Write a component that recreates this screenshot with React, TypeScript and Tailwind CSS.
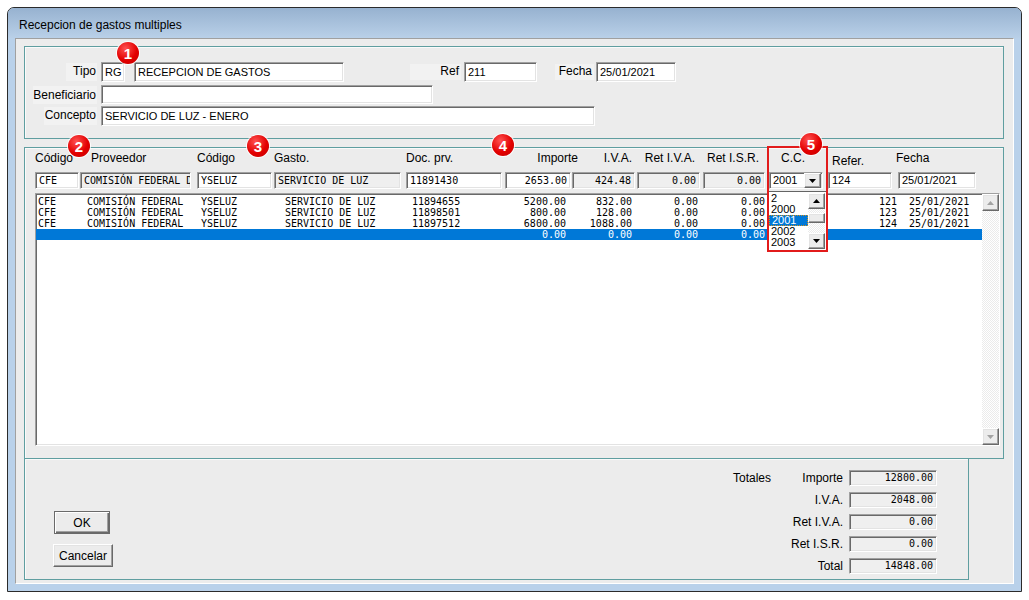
import clsx from "clsx";
import type { ReactNode } from "react";

const sans = "font-['Liberation_Sans',Arial,sans-serif]";
const mono = "font-['DejaVu_Sans_Mono','Liberation_Mono',monospace]";

const sunken =
    "border border-t-[#a0a0a0] border-l-[#a0a0a0] border-r-white border-b-white shadow-[inset_1px_1px_0_#696969,inset_-1px_-1px_0_#e3e3e3]";
const raised =
    "border border-t-white border-l-white border-r-[#696969] border-b-[#696969] shadow-[inset_-1px_-1px_0_#a0a0a0,inset_1px_1px_0_#e3e3e3]";
const checker = "bg-[image:repeating-conic-gradient(#ffffff_0_25%,#ebebeb_0_50%)] bg-[length:2px_2px]";
const groupBox = "border border-[#5f9ea0] shadow-[inset_1px_1px_0_#fafafa]";

const Field = ({
    className,
    gray = false,
    isMono = false,
    right = false,
    children,
}: {
    className?: string;
    gray?: boolean;
    isMono?: boolean;
    right?: boolean;
    children?: ReactNode;
}) => (
    <div
        className={clsx(
            sunken,
            "flex shrink-0 items-center overflow-hidden whitespace-nowrap leading-none text-black",
            gray ? "bg-[#efefef]" : "bg-white",
            isMono ? `${mono} text-[10px]` : "text-[11px]",
            right ? "justify-end pr-[3px]" : "pl-[3px]",
            className,
        )}
    >
        {children}
    </div>
);

const Tri = ({ up = false, color }: { up?: boolean; color: string }) => (
    <svg width="7" height="4" viewBox="0 0 7 4">
        <polygon points={up ? "3.5,0 7,4 0,4" : "0,0 7,0 3.5,4"} fill={color} />
    </svg>
);

const ScrollBtn = ({ up = false, color, className }: { up?: boolean; color: string; className?: string }) => (
    <div className={clsx(raised, "flex shrink-0 items-center justify-center bg-[#ececec]", className)}>
        <Tri up={up} color={color} />
    </div>
);

const Badge = ({ n, className }: { n: number; className: string }) => (
    <div
        className={clsx(
            "absolute z-20 flex h-[22px] w-[22px] items-center justify-center rounded-full bg-[radial-gradient(circle_at_38%_30%,#ff5252,#e30000_55%,#c40000)] text-[15px] font-bold leading-none text-white shadow-[0_0_0_1px_rgba(255,255,255,0.85)]",
            sans,
            className,
        )}
    >
        {n}
    </div>
);

const heads: [string, string][] = [
    ["Código", "w-[56px]"],
    ["Proveedor", "w-[106px]"],
    ["Código", "w-[77px]"],
    ["Gasto.", "w-[132px]"],
    ["Doc. prv.", "w-[114px]"],
    ["Importe", "w-[58px] text-right"],
    ["I.V.A.", "w-[54px] text-right"],
    ["Ret I.V.A.", "w-[63px] text-right"],
    ["Ret I.S.R.", "w-[64px] text-right"],
    ["C.C.", "ml-[22px] w-[51px]"],
    ["Refer.", "w-[64px] pt-[3px]"],
    ["Fecha", "w-[60px]"],
];

const cols = [
    "w-[51px] pl-[2px]",
    "w-[114px]",
    "w-[84px]",
    "w-[127px]",
    "w-[88px]",
    "w-[66px] text-right",
    "w-[66px] text-right",
    "w-[66px] text-right",
    "w-[67px] text-right",
    "w-[132px] text-right",
    "pl-[12px]",
];

const rows = [
    ["CFE", "COMISIÓN FEDERAL", "YSELUZ", "SERVICIO DE LUZ", "11894655", "5200.00", "832.00", "0.00", "0.00", "121", "25/01/2021"],
    ["CFE", "COMISIÓN FEDERAL", "YSELUZ", "SERVICIO DE LUZ", "11898501", "800.00", "128.00", "0.00", "0.00", "123", "25/01/2021"],
    ["CFE", "COMISIÓN FEDERAL", "YSELUZ", "SERVICIO DE LUZ", "11897512", "6800.00", "1088.00", "0.00", "0.00", "124", "25/01/2021"],
    ["", "", "", "", "", "0.00", "0.00", "0.00", "0.00", "", ""],
];

const totals = [
    ["Importe", "12800.00"],
    ["I.V.A.", "2048.00"],
    ["Ret I.V.A.", "0.00"],
    ["Ret I.S.R.", "0.00"],
    ["Total", "14848.00"],
];

const ccOptions = ["2", "2000", "2001", "2002", "2003"];

export default function App() {
    return (
        <div className={clsx("h-[600px] w-[1029px] bg-white pl-[7px] pt-[7px] text-[12px] text-black", sans)}>
            <div className="flex h-[585px] w-[1015px] flex-col overflow-hidden rounded-t-[7px] border border-[#2b2b2b] bg-[#b9d1ea]">
                {/* title bar */}
                <div className="h-[30px] shrink-0 bg-linear-to-b from-[#97b2d0] to-[#b9d0e8] pl-[11px] pt-[10px] text-[12px] leading-[14px]">
                    Recepcion de gastos multiples
                </div>

                <div className="flex-1 px-[7px] pb-[7px]">
                    <div className="relative h-full border border-t-[#a0a0a0] border-l-[#a0a0a0] border-r-white border-b-white bg-[#ececec]">
                        <Badge n={1} className="left-[101px] top-[3px]" />
                        <Badge n={2} className="left-[52px] top-[96px]" />
                        <Badge n={3} className="left-[231px] top-[96px]" />
                        <Badge n={4} className="left-[476px] top-[95px]" />
                        <Badge n={5} className="left-[784px] top-[94px]" />

                        {/* header fields */}
                        <div className={clsx(groupBox, "ml-[8px] mt-[7px] h-[93px] w-[980px] pt-[15px]")}>
                            <div className="flex h-[20px] items-center">
                                <div className="ml-[41px] h-[18px] w-[31px] bg-[#f2f2f2] pr-[1px] text-right leading-[16px]">Tipo</div>
                                <Field className="ml-[4px] h-[20px] w-[24px]">RG</Field>
                                <Field className="ml-[9px] h-[20px] w-[210px]">RECEPCION DE GASTOS</Field>
                                <div className="ml-[66px] h-[16px] w-[51px] bg-[#f2f2f2] pr-[2px] text-right leading-[14px]">Ref</div>
                                <Field className="ml-[3px] h-[20px] w-[73px]">211</Field>
                                <div className="ml-[18px] h-[16px] w-[39px] bg-[#f2f2f2] pr-[2px] text-right leading-[14px]">Fecha</div>
                                <Field className="ml-[2px] h-[20px] w-[80px]">25/01/2021</Field>
                            </div>
                            <div className="mt-[3px] flex h-[19px] items-center">
                                <div className="ml-[8px] h-[18px] w-[64px] bg-[#f2f2f2] pr-[1px] text-right leading-[18px]">Beneficiario</div>
                                <Field className="ml-[4px] h-[19px] w-[332px]" />
                            </div>
                            <div className="mt-[2px] flex h-[20px] items-center">
                                <div className="ml-[19px] h-[18px] w-[53px] bg-[#f2f2f2] pr-[1px] text-right leading-[16px]">Concepto</div>
                                <Field className="ml-[4px] h-[20px] w-[494px]">SERVICIO DE LUZ - ENERO</Field>
                            </div>
                        </div>

                        {/* detail grid */}
                        <div className={clsx(groupBox, "relative ml-[8px] mt-[8px] h-[312px] w-[980px] pl-[10px] pt-[3px]")}>
                            <div className="flex h-[14px] leading-[14px]">
                                {heads.map(([label, cls], i) => (
                                    <div key={i} className={clsx("shrink-0 whitespace-nowrap", cls)}>
                                        {label}
                                    </div>
                                ))}
                            </div>

                            <div className="mt-[7px] flex h-[17px]">
                                <Field className="w-[44px]" isMono>CFE</Field>
                                <Field className="ml-[1px] w-[111px]" gray isMono>COMISIÓN FEDERAL D</Field>
                                <Field className="ml-[6px] w-[75px]" isMono>YSELUZ</Field>
                                <Field className="ml-[2px] w-[127px]" gray isMono>SERVICIO DE LUZ</Field>
                                <Field className="ml-[5px] w-[96px]" isMono>11891430</Field>
                                <Field className="ml-[3px] w-[66px]" isMono right>2653.00</Field>
                                <Field className="ml-[1px] w-[63px]" gray isMono right>424.48</Field>
                                <Field className="ml-[2px] w-[63px]" gray isMono right>0.00</Field>
                                <Field className="ml-[3px] w-[62px]" gray isMono right>0.00</Field>
                                <div className={clsx(sunken, "ml-[4px] flex w-[54px] shrink-0 items-center bg-white pl-[3px] text-[11px]")}>
                                    <span className="flex-1">2001</span>
                                    <ScrollBtn color="#000" className="mr-[1px] h-[15px] w-[17px]" />
                                </div>
                                <Field className="ml-[5px] w-[64px]">124</Field>
                                <Field className="ml-[6px] w-[78px]">25/01/2021</Field>
                            </div>

                            <div className={clsx(sunken, "mt-[4px] flex h-[253px] w-[965px] bg-white")}>
                                <div className={clsx("flex-1 pt-[2px] text-[10px] leading-[11px]", mono)}>
                                    {rows.map((row, r) => (
                                        <div key={r} className={clsx("flex h-[11px] whitespace-pre", r === 3 ? "bg-[#0078d7] text-white" : "text-black")}>
                                            {row.map((cell, c) => (
                                                <div key={c} className={clsx("shrink-0", cols[c])}>
                                                    {cell}
                                                </div>
                                            ))}
                                        </div>
                                    ))}
                                </div>
                                <div className={clsx("flex w-[17px] shrink-0 flex-col", checker)}>
                                    <ScrollBtn up color="#a3a3a3" className="h-[17px]" />
                                    <div className="flex-1" />
                                    <ScrollBtn color="#a3a3a3" className="h-[17px]" />
                                </div>
                            </div>

                            {/* open C.C. dropdown */}
                            <div className="absolute left-[743px] top-[43px] z-10 flex h-[60px] w-[59px] border border-[#646464] bg-white">
                                <div className="flex-1 pt-[1px] text-[11px] leading-[11px]">
                                    {ccOptions.map((o) => (
                                        <div
                                            key={o}
                                            className={clsx(
                                                "h-[11px] pl-[2px]",
                                                o === "2001" && "border border-dotted border-[#d09020] bg-[#0078d7] pl-[1px] leading-[9px] text-white",
                                            )}
                                        >
                                            {o}
                                        </div>
                                    ))}
                                </div>
                                <div className={clsx("my-[1px] mr-[1px] flex w-[17px] flex-col", checker)}>
                                    <ScrollBtn up color="#000" className="h-[16px]" />
                                    <div className={clsx(raised, "mt-[4px] h-[10px] bg-[#ececec]")} />
                                    <div className="flex-1" />
                                    <ScrollBtn color="#000" className="h-[16px]" />
                                </div>
                            </div>
                            <div className="pointer-events-none absolute left-[742px] top-[-2px] z-10 h-[106px] w-[61px] border-2 border-[#e21b1b]" />
                        </div>

                        {/* totals and buttons */}
                        <div className={clsx(groupBox, "-mt-[1px] ml-[8px] flex h-[122px] w-[945px]")}>
                            <div className="flex flex-col items-start pl-[28px] pt-[52px]">
                                <button
                                    type="button"
                                    className="ml-[1px] h-[23px] w-[56px] border border-[#6a6a6a] bg-[#ececec] text-[12px] shadow-[inset_1px_1px_0_#fff,inset_-1px_-1px_0_#6a6a6a,inset_-2px_-2px_0_#a0a0a0]"
                                >
                                    OK
                                </button>
                                <button type="button" className={clsx(raised, "mt-[10px] h-[23px] w-[60px] bg-[#ececec] text-[12px]")}>
                                    Cancelar
                                </button>
                            </div>
                            <div className="ml-[620px] flex flex-col gap-[6px] pt-[11px]">
                                {totals.map(([label, value], i) => (
                                    <div key={label} className="flex h-[16px] items-center">
                                        <div className="w-[57px]">{i === 0 ? "Totales" : ""}</div>
                                        <div className="w-[53px] whitespace-nowrap text-right">{label}</div>
                                        <Field className="ml-[6px] h-[16px] w-[88px]" gray isMono right>
                                            {value}
                                        </Field>
                                    </div>
                                ))}
                            </div>
                        </div>
                    </div>
                </div>
            </div>
        </div>
    );
}
